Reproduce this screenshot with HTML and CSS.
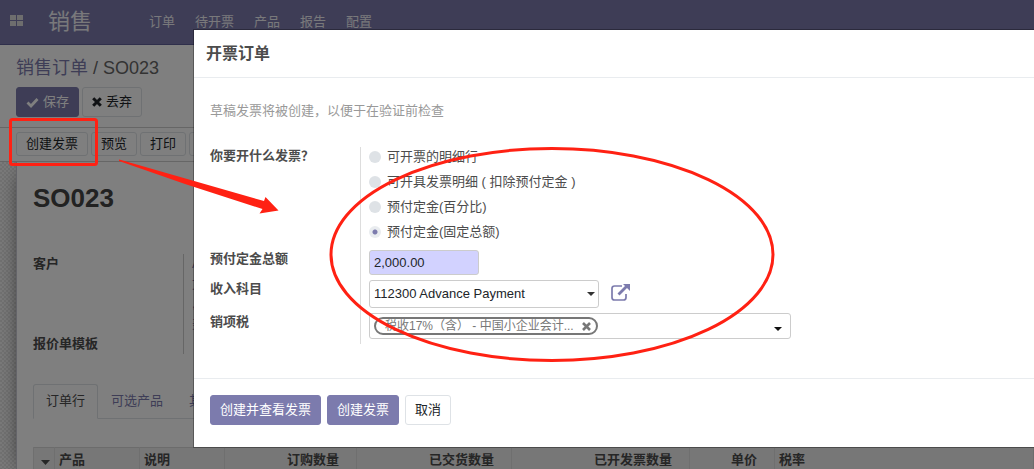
FILE: index.html
```html
<!DOCTYPE html>
<html lang="zh-CN">
<head>
<meta charset="utf-8">
<title>销售订单</title>
<link rel="stylesheet" href="styles.css">
</head>
<body>
<div class="app">
  <nav class="navbar">
    <button class="apps" aria-label="应用">
      <svg width="13" height="11" viewBox="0 0 13 11" fill="#ddd"><path d="M0 0h6v5H0zM7 0h6v5H7zM0 6h6v5H0zM7 6h6v5H7z"/></svg>
    </button>
    <a class="brand" href="#">销售</a>
    <a class="menu" href="#">订单</a>
    <a class="menu" href="#">待开票</a>
    <a class="menu" href="#">产品</a>
    <a class="menu" href="#">报告</a>
    <a class="menu" href="#">配置</a>
  </nav>
  <header class="control">
    <div class="crumbs"><a href="#">销售订单</a> / SO023</div>
    <div class="actions">
      <button class="btn primary"><svg width="13" height="11" viewBox="0 0 13 11"><path d="M1.500 5.500 5 9l6.500-7" fill="none" stroke="#fff" stroke-width="2.800"/></svg>保存</button>
      <button class="btn"><svg width="10" height="10" viewBox="0 0 10 10"><path d="m1.200 1.200 7.600 7.600m0-7.600L1.200 8.800" stroke="#212529" stroke-width="3"/></svg>丢弃</button>
    </div>
  </header>
  <div class="statusbar">
    <button class="btn small">创建发票</button>
    <button class="btn small">预览</button>
    <button class="btn small">打印</button>
    <button class="btn small">取消</button>
  </div>
  <main class="canvas">
    <section class="sheet">
      <h1>SO023</h1>
      <dl class="info">
        <dt>客户</dt>
        <dd>A<br>文<br>,<br>美国</dd>
        <dt>报价单模板</dt>
        <dd></dd>
      </dl>
      <div class="tabs">
        <a class="tab active" href="#">订单行</a>
        <a class="tab" href="#">可选产品</a>
        <a class="tab" href="#">其他信息</a>
      </div>
      <table class="lines">
        <colgroup><col class="c-handle"><col class="c-text"><col class="c-text"><col class="c-qty"><col class="c-sent"><col class="c-billed"><col class="c-price"><col></colgroup>
        <thead>
          <tr><th class="handle"><svg width="9" height="5" viewBox="0 0 9 5"><path d="M0 0h9L4.500 5z" fill="#4c4c4c"/></svg></th><th>产品</th><th>说明</th><th class="num">订购数量</th><th class="num">已交货数量</th><th class="num">已开发票数量</th><th class="num">单价</th><th>税率</th></tr>
        </thead>
      </table>
    </section>
  </main>
</div>

<div class="backdrop"></div>

<form class="modal" role="dialog" aria-labelledby="dialog-title">
  <h2 class="modal-head" id="dialog-title">开票订单</h2>
  <div class="modal-body">
    <p class="hint">草稿发票将被创建，以便于在验证前检查</p>
    <div class="fields">
      <span class="name" id="kind">你要开什么发票？</span>
      <div class="value options" role="radiogroup" aria-labelledby="kind">
        <label><input type="radio" name="kind">可开票的明细行</label>
        <label><input type="radio" name="kind">可开具发票明细 ( 扣除预付定金 )</label>
        <label><input type="radio" name="kind">预付定金(百分比)</label>
        <label><input type="radio" name="kind" checked>预付定金(固定总额)</label>
      </div>
      <label class="name" for="amount">预付定金总额</label>
      <div class="value"><input class="amount" id="amount" type="text" value="2,000.00"></div>
      <label class="name" for="account">收入科目</label>
      <div class="value account-row">
        <div class="select">
          <select class="account" id="account"><option>112300 Advance Payment</option></select>
          <svg class="arrow" width="8" height="4" viewBox="0 0 8 4"><path d="M0 0h8L4 4z" fill="#333"/></svg>
        </div>
        <button class="external" type="button" aria-label="打开">
          <svg width="20" height="17" viewBox="0 0 20 17" fill="none" stroke="#7c7bad"><path d="M11 2H3.500Q1 2 1 4.500v9Q1 16 3.500 16h9q2.500 0 2.500-2.500V10" stroke-width="1.700"/><path d="m7.500 10.500 8-8" stroke-width="2.800"/><path d="M12 0h7v7z" fill="#7c7bad" stroke="none"/></svg>
        </button>
      </div>
      <label class="name" for="tax">销项税</label>
      <div class="value last">
        <div class="tags">
          <span class="tag">税收17%（含） - 中国小企业会计...<button type="button" aria-label="移除"><svg width="9" height="9" viewBox="0 0 9 9"><path d="m1 1 7 7m0-7L1 8" stroke="#777" stroke-width="2.600"/></svg></button></span>
          <input id="tax" type="text">
          <svg class="caret" width="8" height="4" viewBox="0 0 8 4"><path d="M0 0h8L4 4z" fill="#111"/></svg>
        </div>
      </div>
    </div>
  </div>
  <footer class="modal-foot">
    <button class="btn primary" type="button">创建并查看发票</button>
    <button class="btn primary" type="button">创建发票</button>
    <button class="btn" type="button">取消</button>
  </footer>
</form>

<svg class="marks" width="1034" height="469" viewBox="0 0 1034 469" fill="none" stroke="#ff2113">
  <rect x="10.500" y="119.500" width="86" height="45" rx="2" stroke-width="3"/>
  <ellipse cx="552" cy="254.500" rx="221" ry="106" stroke-width="3"/>
  <path d="M119 159.500 121 160 264 201l1.500-4 13 13.500-19 3 3-4.500L185 184 119 161z" fill="#ff2113" stroke="none"/>
</svg>
</body>
</html>
```
FILE: styles.css
```css
* { box-sizing: border-box; }
body {
  margin: 0;
  height: 100vh;
  overflow: hidden;
  position: relative;
  font: 13px/20px "Liberation Sans", "Noto Sans CJK SC", sans-serif;
  text-spacing-trim: space-all;
  color: #4c4c4c;
  background: #fff;
}
a { color: #7c7bad; text-decoration: none; }
button, input, select { font: inherit; }
svg { flex: none; }

.app { display: flex; flex-direction: column; height: 100%; overflow: hidden; }
.app > * { flex: none; }

.navbar {
  display: flex;
  align-items: center;
  height: 45px;
  padding: 0 10px;
  background: #7c7bad;
  border-bottom: 1px solid #5f5e97;
}
.navbar a { color: #fff; opacity: .9; }
.apps { display: flex; width: 38px; padding: 0 0 4px; border: 0; background: none; }
.navbar .brand { font-size: 22px; line-height: 44px; margin-right: 47px; }
.navbar .menu { padding: 0 10px; }

.control { padding: 12px 16px 10px; border-bottom: 1px solid #ccc; }
.crumbs { font-size: 18px; line-height: 22px; margin-bottom: 8px; color: #666; }
.actions { display: flex; gap: 3px; }

.btn {
  display: inline-flex;
  align-items: center;
  justify-content: center;
  gap: 4px;
  height: 30px;
  padding: 0 9px;
  border: 1px solid #dee2e6;
  border-radius: 3px;
  background: #fff;
  color: #212529;
  white-space: nowrap;
}
.btn.primary { background: #7c7bad; border-color: #7c7bad; color: #fff; }
.btn.small { height: 24px; }

.statusbar {
  display: flex;
  gap: 3px;
  padding: 4px 16px 5px;
  border-bottom: 1px solid #ccc;
}

.app .canvas {
  flex: 1;
  min-height: 0;
  overflow: hidden;
  padding-left: 16px;
  background: repeating-conic-gradient(#e2e2e2 0 25%, #f4f4f4 0 50%) 0 0 / 4px 4px;
}
.sheet {
  height: 100%;
  padding: 20px 0 0 16px;
  background: #fff;
  border-left: 1px solid #c8c8d3;
  box-shadow: 0 5px 20px -8px #000;
}
h1 { margin: 0 0 40px; font-size: 26px; line-height: 32px; color: #444; }
.info { display: grid; grid-template-columns: 150px 1fr; margin: 0 0 30px; }
.info dt { font-weight: bold; color: #4c4c4c; }
.info dd { margin: 0; padding-left: 8px; border-left: 1px solid #ccc; color: #7c7bad; }
.tabs { display: flex; border-bottom: 1px solid #dee2e6; margin-bottom: 28px; }
.tab { padding: 6px 12px; border: 1px solid transparent; line-height: 20px; }
.tab.active { color: #4c4c4c; border-color: #dee2e6 #dee2e6 #fff; border-radius: 3px 3px 0 0; margin-bottom: -1px; }

.lines { width: 100%; table-layout: fixed; border-collapse: collapse; background: #eee; border: 1px solid #d8d8d8; }
.lines th { padding: 2px 4px 3px; text-align: left; font-weight: bold; color: #4c4c4c; border-left: 1px solid #dedede; white-space: nowrap; }
.lines .num { text-align: right; padding-right: 17px; }
.lines .handle { padding: 0 4px; text-align: right; line-height: 8px; }
.c-handle { width: 21px; }
.c-text { width: 85px; }
.c-qty { width: 132px; }
.c-sent { width: 155px; }
.c-billed { width: 178px; }
.c-price { width: 85px; }

.backdrop { position: absolute; inset: 0; background: rgba(0, 0, 0, .5); }

.modal {
  position: absolute;
  top: 30px;
  left: 194px;
  right: 0;
  background: #fff;
  box-shadow: 0 0 0 1px rgba(0, 0, 0, .3);
}
.modal-head {
  margin: 0;
  padding: 12px;
  font-size: 16px;
  line-height: 23px;
  font-weight: bold;
  border-bottom: 1px solid #e9ecef;
}
.modal-body { padding: 23px 16px 34px; }
.hint { margin: 0 0 26px; color: #999; }
.fields { display: grid; grid-template-columns: 150px 1fr; }
.name { font-weight: bold; line-height: 18px; padding-top: 3px; }
.fields .name:first-child { padding-top: 0; }
.value { padding: 3px 0 2px 8px; border-left: 1px solid #ddd; }
.value.last { padding-bottom: 5px; }
.options { display: flex; flex-direction: column; align-items: flex-start; gap: 5px; padding: 0 0 5px 8px; }
.options label { display: flex; align-items: center; gap: 6px; }
.options input {
  appearance: none;
  width: 12px;
  height: 12px;
  margin: 0;
  border-radius: 50%;
  background: #dee2e6;
}
.options input:checked { background: radial-gradient(circle, #7c7bad 2px, #e9ecef 3px); }

.amount, .account, .tags { border: 1px solid #ccc; border-radius: 3px; color: #212529; }
.amount { display: block; width: 110px; height: 25px; padding: 0 4px; background: #d2d2ff; }
.account-row { display: flex; align-items: center; gap: 12px; }
.select { position: relative; width: 230px; }
.account { display: block; appearance: none; width: 100%; height: 28px; padding: 0 4px; background: #fff; }
.arrow { position: absolute; top: 12px; right: 4px; pointer-events: none; }
.external { display: flex; padding: 0 0 4px; border: 0; background: none; }
.tags { display: flex; align-items: center; max-width: 422px; height: 26px; padding: 0 8px 0 4px; }
.tag {
  display: flex;
  align-items: center;
  gap: 8px;
  height: 18px;
  padding: 0 5px 0 9px;
  border: 2px solid #777;
  border-radius: 9px;
  font-size: 12px;
  line-height: 14px;
  color: #777;
  white-space: nowrap;
}
.tag button { display: flex; padding: 0; border: 0; background: none; }
.tags input { flex: 1; min-width: 0; border: 0; padding: 0; outline: 0; height: 20px; }
.caret { margin-top: 5px; }

.modal-foot { display: flex; gap: 6px; padding: 16px 16px 22px; border-top: 1px solid #e9ecef; }

.marks { position: absolute; top: 0; left: 0; pointer-events: none; }
```
